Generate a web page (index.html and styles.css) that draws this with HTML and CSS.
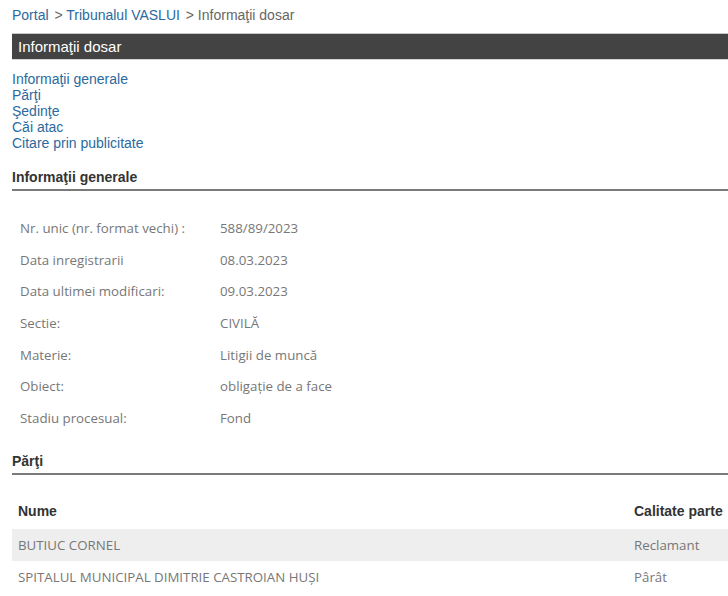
FILE: index.html
```html
<!DOCTYPE html>
<html lang="ro">

<head>
    <meta charset="UTF-8">
    <meta name="viewport" content="width=device-width, initial-scale=1.0">
    <title>Informaţii dosar</title>
    <link rel="stylesheet" href="styles.css">
</head>

<body>

    <div class="pagina">
        <div class="breadcrumb">
            <a href="#">Portal</a>
            <span class="sep">&gt;</span>
            <a href="#">Tribunalul VASLUI</a>
            <span class="sep">&gt; Informaţii dosar</span>
        </div>

        <div class="bara-titlu">Informaţii dosar</div>

        <div class="meniu">
            <a href="#">Informaţii generale</a>
            <a href="#">Părţi</a>
            <a href="#">Şedinţe</a>
            <a href="#">Căi atac</a>
            <a href="#">Citare prin publicitate</a>
        </div>

        <h3 class="titlu-sectiune">Informaţii generale</h3>

        <table class="info">
            <tr><td class="eticheta">Nr. unic (nr. format vechi) :</td><td>588/89/2023</td></tr>
            <tr><td class="eticheta">Data inregistrarii</td><td>08.03.2023</td></tr>
            <tr><td class="eticheta">Data ultimei modificari:</td><td>09.03.2023</td></tr>
            <tr><td class="eticheta">Sectie:</td><td>CIVILĂ</td></tr>
            <tr><td class="eticheta">Materie:</td><td>Litigii de muncă</td></tr>
            <tr><td class="eticheta">Obiect:</td><td>obligaţie de a face</td></tr>
            <tr><td class="eticheta">Stadiu procesual:</td><td>Fond</td></tr>
        </table>

        <h3 class="titlu-sectiune titlu-parti">Părţi</h3>

        <table class="parti">
            <tr>
                <th class="col-nume">Nume</th>
                <th>Calitate parte</th>
            </tr>
            <tr class="par">
                <td>BUTIUC CORNEL</td>
                <td>Reclamant</td>
            </tr>
            <tr>
                <td>SPITALUL MUNICIPAL DIMITRIE CASTROIAN HUŞI</td>
                <td>Pârât</td>
            </tr>
        </table>
    </div>

</body>

</html>
```

FILE: styles.css
```css
* {
    margin: 0;
    padding: 0;
    box-sizing: border-box;
}

body {
    background-color: white;
    font-family: 'Liberation Sans', Arial, sans-serif;
    overflow: hidden;
}

.pagina {
    padding-left: 12px;
    width: 760px;
}

.breadcrumb {
    font-size: 14px;
    line-height: 16px;
    padding-top: 7px;
    color: #666;
}

.breadcrumb a {
    color: #2b6a9e;
    text-decoration: none;
}

.breadcrumb .sep {
    margin-left: 2px;
}

.bara-titlu {
    margin-top: 10px;
    height: 27px;
    background-color: #434343;
    border-top: 1px solid #c8c8c8;
    border-bottom: 1px solid #d4d4d4;
    color: white;
    font-size: 15px;
    line-height: 25px;
    padding-left: 6px;
}

.meniu {
    margin-top: 11px;
    display: flex;
    flex-direction: column;
    align-items: flex-start;
}

.meniu a {
    color: #2b6a9e;
    font-size: 14px;
    line-height: 16px;
    text-decoration: none;
}

.titlu-sectiune {
    margin-top: 17px;
    font-size: 14px;
    font-weight: bold;
    color: #333;
    line-height: 18px;
    padding-bottom: 3px;
    border-bottom: 2px solid #7a7a7a;
}

.info {
    margin-top: 21px;
    border-collapse: collapse;
    font-family: 'Open Sans', sans-serif;
    font-size: 13.3px;
    color: #777;
}

.info td {
    height: 31.7px;
    padding: 0;
}

.info .eticheta {
    width: 208px;
    padding-left: 8px;
}

.titlu-parti {
    margin-top: 18px;
}

.parti {
    margin-top: 19px;
    width: 100%;
    border-collapse: collapse;
    font-family: 'Open Sans', sans-serif;
    font-size: 13.3px;
    color: #777;
}

.parti th {
    text-align: left;
    font-family: 'Liberation Sans', Arial, sans-serif;
    font-size: 14px;
    font-weight: bold;
    color: #333;
    height: 35px;
    padding-left: 6px;
}

.parti .col-nume {
    width: 616px;
}

.parti td {
    height: 32px;
    padding-left: 6px;
}

.parti .par {
    background-color: #eeeeee;
}
```
